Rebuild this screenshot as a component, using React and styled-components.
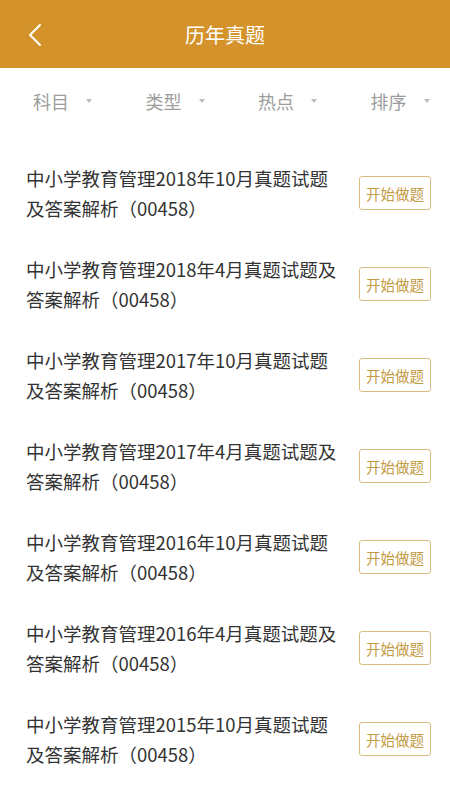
import styled, { createGlobalStyle } from 'styled-components';

const GlobalStyle = createGlobalStyle`
  html, body { margin: 0; padding: 0; background: #fff; }
  body { font-family: "Noto Sans CJK SC", "Noto Sans", sans-serif; }
  * { box-sizing: border-box; }
`

const Page = styled.div`
  width: 450px;
  height: 800px;
  background: #fff;
  overflow: hidden;
`

const Header = styled.header`
  height: 68px;
  background: #d4922b;
  display: grid;
  grid-template-columns: 60px 1fr 60px;
  align-items: center;
`

const BackBtn = styled.button`
  border: 0;
  background: none;
  padding: 2px 0 0 27px;
  height: 68px;
  display: flex;
  align-items: center;
`

const Title = styled.h1`
  margin: 0;
  text-align: center;
  color: #fff;
  font-size: 20px;
  font-weight: 400;
`

const FilterBar = styled.nav`
  height: 66px;
  display: grid;
  grid-template-columns: repeat(4, 1fr);
  align-items: center;
`

const Filter = styled.div`
  display: flex;
  align-items: center;
  padding-left: 33px;
  color: #9d9d9d;
  font-size: 18px;
`

const Caret = styled.span`
  margin-left: 17px;
  width: 0;
  height: 0;
  border-left: 3.5px solid transparent;
  border-right: 3.5px solid transparent;
  border-top: 4px solid #bdbdbd;
`

const List = styled.ul`
  list-style: none;
  margin: 14px 0 0;
  padding: 0;
`

const Row = styled.li`
  display: flex;
  align-items: center;
  justify-content: space-between;
  padding: 15px 19px 16px 26px;
`

const Name = styled.p`
  margin: 0;
  width: 315px;
  font-size: 18.5px;
  line-height: 30px;
  color: #333;
`

const StartBtn = styled.button`
  width: 72px;
  height: 34px;
  padding: 0;
  border: 1px solid #d9bd80;
  border-radius: 3px;
  background: #fff;
  color: #c49b45;
  font-family: inherit;
  font-size: 14.5px;
`

const filters = ['科目', '类型', '热点', '排序']

const papers = [
  '中小学教育管理2018年10月真题试题及答案解析（00458）',
  '中小学教育管理2018年4月真题试题及答案解析（00458）',
  '中小学教育管理2017年10月真题试题及答案解析（00458）',
  '中小学教育管理2017年4月真题试题及答案解析（00458）',
  '中小学教育管理2016年10月真题试题及答案解析（00458）',
  '中小学教育管理2016年4月真题试题及答案解析（00458）',
  '中小学教育管理2015年10月真题试题及答案解析（00458）',
]

function App(){
  return (
    <Page>
      <GlobalStyle />
      <Header>
        <BackBtn>
          <svg width="16" height="24" viewBox="0 0 16 24">
            <path d="M13 2 L3 12 L13 22" fill="none" stroke="#fff" strokeWidth="2" strokeLinecap="round" strokeLinejoin="round" />
          </svg>
        </BackBtn>
        <Title>历年真题</Title>
        <div />
      </Header>
      <FilterBar>
        {filters.map(f => (
          <Filter key={f}>{f}<Caret /></Filter>
        ))}
      </FilterBar>
      <List>
        {papers.map((p, i) => (
          <Row key={i}>
            <Name>{p}</Name>
            <StartBtn>开始做题</StartBtn>
          </Row>
        ))}
      </List>
    </Page>
  )
}

export default App
